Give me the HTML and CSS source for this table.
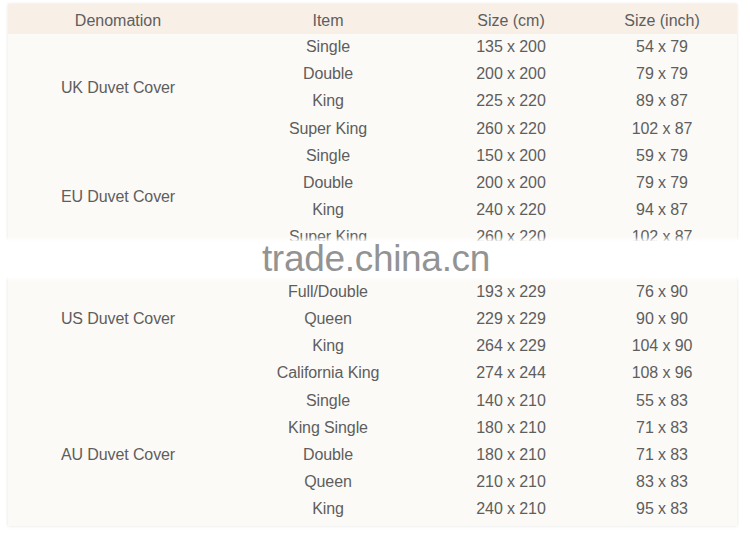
FILE: index.html
```html
<!DOCTYPE html>
<html>
<head>
<meta charset="utf-8">
<link rel="stylesheet" href="styles.css">
</head>
<body>
<div class="page">
  <div class="panel">
    <div class="head">
      <div>Denomation</div><div>Item</div><div>Size (cm)</div><div class="c4">Size (inch)</div>
    </div>
    <div class="grid">
      <div class="group g4">UK Duvet Cover</div>
      <div>Single</div><div>135 x 200</div><div>54 x 79</div>
      <div>Double</div><div>200 x 200</div><div>79 x 79</div>
      <div>King</div><div>225 x 220</div><div>89 x 87</div>
      <div>Super King</div><div>260 x 220</div><div>102 x 87</div>

      <div class="group g4">EU Duvet Cover</div>
      <div>Single</div><div>150 x 200</div><div>59 x 79</div>
      <div>Double</div><div>200 x 200</div><div>79 x 79</div>
      <div>King</div><div>240 x 220</div><div>94 x 87</div>
      <div>Super King</div><div>260 x 220</div><div>102 x 87</div>

      <div class="group g5">US Duvet Cover</div>
      <div></div><div></div><div></div>
      <div>Full/Double</div><div>193 x 229</div><div>76 x 90</div>
      <div>Queen</div><div>229 x 229</div><div>90 x 90</div>
      <div>King</div><div>264 x 229</div><div>104 x 90</div>
      <div>California King</div><div>274 x 244</div><div>108 x 96</div>

      <div class="group g5">AU Duvet Cover</div>
      <div>Single</div><div>140 x 210</div><div>55 x 83</div>
      <div>King Single</div><div>180 x 210</div><div>71 x 83</div>
      <div>Double</div><div>180 x 210</div><div>71 x 83</div>
      <div>Queen</div><div>210 x 210</div><div>83 x 83</div>
      <div>King</div><div>240 x 210</div><div>95 x 83</div>
    </div>
  </div>
  <div class="watermark"><span>trade.china.cn</span></div>
</div>
</body>
</html>
```

FILE: styles.css
```css
html, body {
  margin: 0;
  padding: 0;
  background: #ffffff;
}
.page {
  position: relative;
  width: 750px;
  height: 540px;
  padding: 4px 0 0 8px;
  box-sizing: border-box;
  font-family: "Liberation Sans", Arial, sans-serif;
  font-size: 16px;
  color: #5e5e5e;
}
.panel {
  width: 729px;
  background: #fcfaf6;
  box-shadow: 0 0 3px rgba(0, 0, 0, 0.12);
  padding-bottom: 3px;
}
.head {
  display: grid;
  grid-template-columns: 220px 200px 166px 136px;
  height: 29.5px;
  padding-top: 5px;
  box-sizing: border-box;
  background: #f8efe7;
  align-items: center;
  text-align: center;
}
.grid {
  display: grid;
  grid-template-columns: 220px 200px 166px 136px;
  grid-auto-rows: 27.2px;
  text-align: center;
  letter-spacing: -0.1px;
}
.grid > div {
  display: flex;
  align-items: center;
  justify-content: center;
}
.grid > .group {
  grid-row: span 4;
  padding-top: 1px;
}
.grid > .g5 {
  grid-row: span 5;
}
.watermark {
  position: absolute;
  left: 0;
  right: 0;
  top: 241px;
  height: 36px;
  background: #ffffff;
  box-shadow: 0 0 4px 2px #ffffff;
  text-align: center;
}
.watermark span {
  display: inline-block;
  font-family: "Liberation Sans", Arial, sans-serif;
  font-size: 37px;
  line-height: 36px;
  color: #939393;
  letter-spacing: -0.3px;
  padding-left: 2px;
}
```
